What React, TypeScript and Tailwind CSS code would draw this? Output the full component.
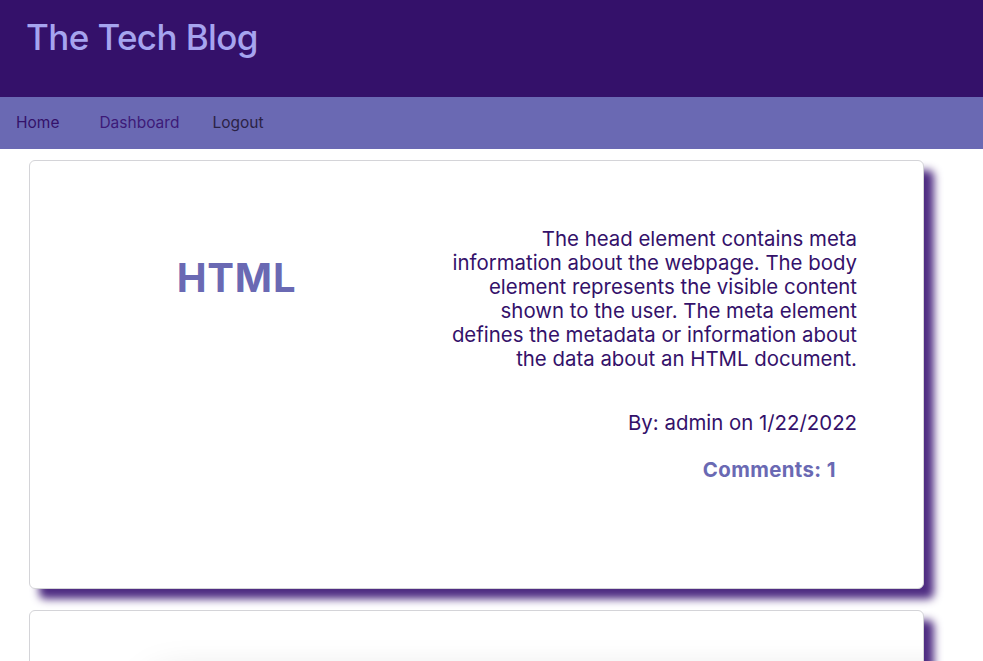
import React from "react";

const lines = [
  "The head element contains meta",
  "information about the webpage. The body",
  "element represents the visible content",
  "shown to the user. The meta element",
  "defines the metadata or information about",
  "the data about an HTML document.",
];

export default function App() {
  return (
    <div className="min-h-[661px] bg-white" style={{ fontFamily: "Inter, 'Noto Sans', sans-serif" }}>
      <header className="h-[97px] bg-[#34116a] px-[26px] pt-[13px]">
        <h1 className="text-[35px] font-medium leading-[48px] text-[#a6a4ef] tracking-[-0.6px]">The Tech Blog</h1>
      </header>
      <nav className="flex h-[52px] items-center bg-[#6a69b3] pl-[16px] text-[15.5px]">
        <a className="text-[#34116a]">Home</a>
        <a className="ml-[40px] text-[#3d1a78]">Dashboard</a>
        <a className="ml-[33px] text-[#2a2245]">Logout</a>
      </nav>
      <main className="flex flex-col gap-[21px] pl-[29px] pt-[11px]">
        <section className="flex h-[429px] w-[895px] rounded-[6px] border border-[#d4d4d8] bg-white shadow-[10px_10px_8px_#4e2c82]">
          <div className="w-[413px] pt-[93px] text-center">
            <h2 className="text-[40px] font-bold leading-[48px] tracking-[0.8px] text-[#6a69b3]">HTML</h2>
          </div>
          <div className="w-[414px] pt-[66px] text-right text-[20.4px] leading-[24px] text-[#34116a]">
            <p>
              {lines.map((l, i) => (
                <span key={i} className="block whitespace-nowrap">{l}</span>
              ))}
            </p>
            <p className="mt-[40px]">By: admin on 1/22/2022</p>
            <p className="mt-[23px] pr-[21px] font-bold tracking-[0.4px] text-[#6a69b3]">Comments: 1</p>
          </div>
        </section>
        <section className="relative h-[200px] w-[895px] overflow-hidden rounded-[6px] border border-[#d4d4d8] bg-white shadow-[10px_10px_8px_#4e2c82]">
          <div className="absolute left-[120px] top-[68px] h-[200px] w-[900px] rounded-[20px] bg-white shadow-[0_0_40px_rgba(0,0,0,0.18)]" />
        </section>
      </main>
    </div>
  );
}
